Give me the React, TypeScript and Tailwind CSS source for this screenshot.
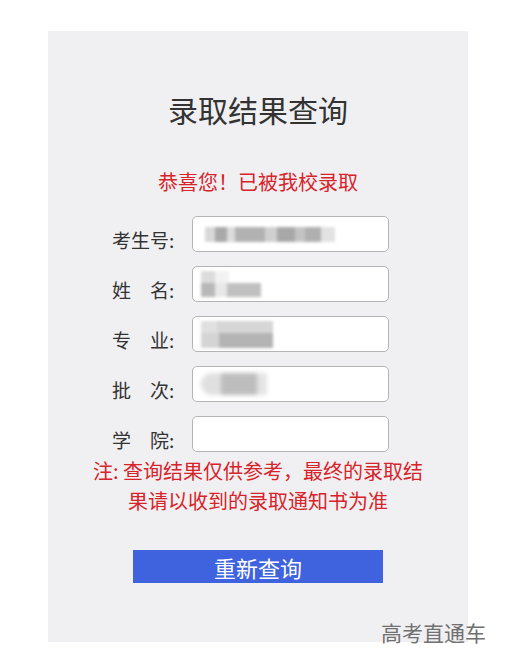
import React from "react";

const font = { fontFamily: '"Noto Sans CJK SC", "Noto Sans", sans-serif' };

function Blob({ w, c }: { w: number; c: string }) {
  return <div style={{ width: w, background: c }} className="h-full" />;
}

function Row({ label, children }: { label: string; children?: React.ReactNode }) {
  return (
    <div className="flex items-center h-[36px]">
      <div className="w-[80px] pt-[10px] text-[19px] leading-[19px] text-[#333] whitespace-pre">{label}</div>
      <div className="w-[197px] h-[36px] bg-white border border-[#b4b4b4] rounded-[5px] flex items-center overflow-hidden">
        {children}
      </div>
    </div>
  );
}

export default function App() {
  return (
    <div className="relative w-[518px] h-[672px] bg-white" style={font}>
      <div className="ml-[48px] pt-[31px]">
        <div className="w-[420px] h-[611px] bg-[#f0f0f2] flex flex-col items-center pt-[63px]">
          <div className="text-[30px] leading-[30px] text-[#333]">录取结果查询</div>
          <div className="mt-[48px] text-[20px] leading-[20px] text-[#d8232a]">恭喜您！已被我校录取</div>
          <div className="mt-[24px] self-start ml-[64px] flex flex-col gap-[14px]">
            <Row label="考生号:">
              <div className="ml-[12px] flex h-[15px] blur-[1.5px]">
                <Blob w={10} c="#d8d8d8" />
                <Blob w={12} c="#a9a9a9" />
                <Blob w={8} c="#dcdcdc" />
                <Blob w={30} c="#b2b2b2" />
                <Blob w={12} c="#d0d0d0" />
                <Blob w={18} c="#a8a8a8" />
                <Blob w={10} c="#c4c4c4" />
                <Blob w={16} c="#b0b0b0" />
                <Blob w={14} c="#e2e2e2" />
              </div>
            </Row>
            <Row label={"姓\u3000名:"}>
              <div className="ml-[8px] flex flex-col h-[26px] blur-[1.5px]">
                <div className="flex h-[12px]">
                  <Blob w={14} c="#dcdcdc" />
                  <Blob w={14} c="#f2f2f2" />
                  <Blob w={32} c="#ffffff" />
                </div>
                <div className="flex h-[14px]">
                  <Blob w={14} c="#b8b8b8" />
                  <Blob w={12} c="#e8e8e8" />
                  <Blob w={34} c="#c0c0c0" />
                </div>
              </div>
            </Row>
            <Row label={"专\u3000业:"}>
              <div className="ml-[8px] flex flex-col h-[27px] blur-[1.5px]">
                <div className="flex h-[12px]">
                  <Blob w={16} c="#e0e0e0" />
                  <Blob w={56} c="#d6d6d6" />
                </div>
                <div className="flex h-[15px]">
                  <Blob w={18} c="#d4d4d4" />
                  <Blob w={54} c="#b4b4b4" />
                </div>
              </div>
            </Row>
            <Row label={"批\u3000次:"}>
              <div className="ml-[8px] flex h-[22px] blur-[2px]">
                <div className="w-[20px] h-full bg-[#e0e0e0] rounded-l-full" />
                <Blob w={36} c="#bdbdbd" />
                <Blob w={10} c="#e4e4e4" />
              </div>
            </Row>
            <Row label={"学\u3000院:"} />
          </div>
          <div className="mt-[4px] w-[340px] text-center text-[20px] leading-[30px] text-[#d8232a]">
            注: 查询结果仅供参考，最终的录取结果请以收到的录取通知书为准
          </div>
          <div className="mt-[34px] w-[250px] h-[33px] bg-[#3f63de] flex items-center justify-center text-white text-[22px] leading-[22px]">
            重新查询
          </div>
        </div>
      </div>
      <div className="absolute left-[381px] top-[620px] text-[21px] leading-[24px] text-[#707070]">高考直通车</div>
    </div>
  );
}
